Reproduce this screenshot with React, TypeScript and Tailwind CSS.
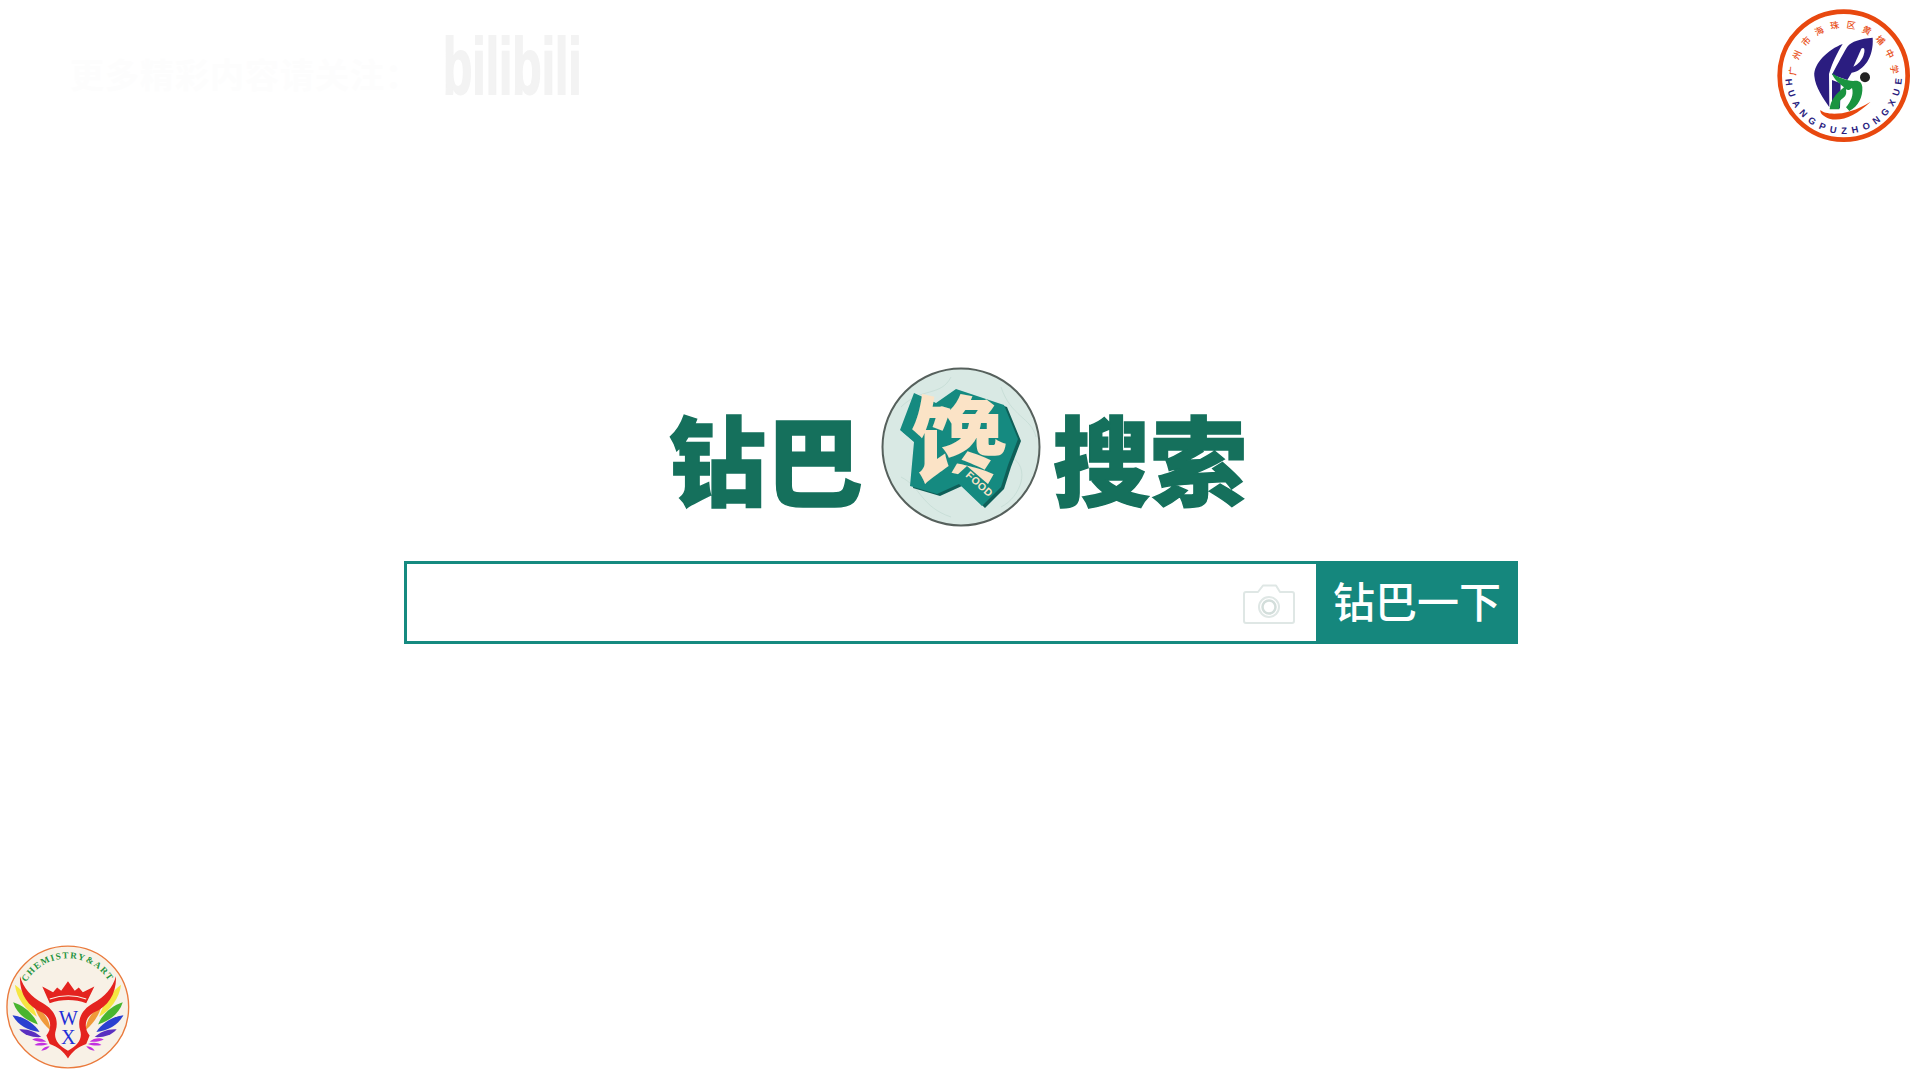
const CJK = "'Noto Sans CJK SC','Noto Sans',sans-serif";

function SchoolBadge() {
  return (
    <svg viewBox="0 0 480 480" className="w-full h-full">
      <defs>
        <path id="hp-top" d="M108 227 A143 143 0 1 1 394 227" />
        <path id="hp-bottom" d="M76 227 A175 175 0 0 0 426 227" />
      </defs>
      <circle cx="251" cy="227" r="192" fill="#fff" stroke="#e8480f" strokeWidth="14" />
      <text fontFamily={CJK} fontSize="27" fontWeight="500" fill="#e8501a">
        <textPath href="#hp-top" startOffset="0%" textLength="445">广州市海珠区黄埔中学</textPath>
      </text>
      <text fontFamily="'Liberation Sans',sans-serif" fontSize="28" fontWeight="700" fill="#2b1d80">
        <textPath href="#hp-bottom" startOffset="2%" textLength="530">HUANGPUZHONGXUE</textPath>
      </text>
      <path d="M248 132 C205 148 160 190 163 228 C166 262 190 295 208 322 L207 222 C216 190 232 158 248 132Z" fill="#2b1d80" />
      <path d="M338 113 C300 116 275 124 262 140 C245 168 226 205 216 224 L262 240 L275 218 C312 212 342 170 338 113Z" fill="#2b1d80" />
      <path d="M304 146 C314 140 316 150 310 168 C302 186 290 196 280 200 Z" fill="#fff" />
      <path d="M216 240 L242 250 L240 325 L216 325Z" fill="#2b1d80" />
      <path d="M216 220 C235 232 260 243 280 243 C296 240 306 246 307 262 C309 290 295 320 268 333 L258 322 C272 305 282 285 276 264 C270 270 264 272 258 268 C262 290 250 292 240 302 L238 328 L209 328 C212 300 225 285 252 262 C240 252 222 240 216 220Z" fill="#1a9440" />
      <circle cx="315" cy="232" r="15" fill="#222" />
      <path d="M181 330 C198 346 262 350 332 305 C288 346 245 366 208 356 C192 350 180 342 181 330Z" fill="#e8480f" />
    </svg>
  );
}

function Feathers() {
  return (
    <g>
      <path d="M47 150 C52 190 78 225 112 245 C100 205 75 170 47 150Z" fill="#f5e642" />
      <path d="M42 202 C52 235 78 255 115 268 C105 240 75 212 42 202Z" fill="#49b52f" />
      <path d="M40 240 C55 270 85 285 120 290 C105 265 75 245 40 240Z" fill="#2a3fd0" />
      <path d="M60 282 C75 300 100 307 125 305 C110 290 85 280 60 282Z" fill="#5a2fc0" />
      <path d="M98 312 C110 318 125 320 140 318 C128 308 110 305 98 312Z M105 328 C118 332 132 330 145 325 C132 320 115 320 105 328Z M125 345 C135 345 145 340 150 332 C140 332 130 336 125 345Z" fill="#c32fe0" />
      <path d="M105 215 C115 245 130 265 152 285 C150 255 132 225 105 215Z" fill="#f09a3a" />
      <path d="M62 125 C60 175 85 215 128 232 C152 245 160 275 140 300 L150 325 C175 335 190 345 204 368 L204 345 C175 330 160 310 168 285 C178 250 160 222 130 205 C95 185 72 160 62 125Z" fill="#e4231f" />
    </g>
  );
}

function ChemBadge() {
  return (
    <svg viewBox="0 0 420 420" className="w-full h-full">
      <defs>
        <path id="ch-top" d="M80 143 A143 143 0 0 1 327 143" />
      </defs>
      <circle cx="203.5" cy="216" r="180" fill="#f8f1e6" stroke="#ea7a3c" strokeWidth="4" />
      <text fontFamily="'Liberation Serif',serif" fontSize="27" fontWeight="700" fill="#1f9440">
        <textPath href="#ch-top" startOffset="0%" textLength="292">CHEMISTRY&amp;ART</textPath>
      </text>
      <Feathers />
      <g transform="translate(408 0) scale(-1 1)">
        <Feathers />
      </g>
      <path d="M150 205 L128 155 L160 172 L172 158 L184 168 L204 140 L224 168 L236 158 L248 172 L282 155 L258 205 C225 192 185 192 150 205Z" fill="#e4231f" />
      <path d="M150 192 C185 180 225 180 258 192" fill="none" stroke="#f8f1e6" strokeWidth="3" />
      <text x="205" y="268" textAnchor="middle" fontFamily="'Liberation Serif',serif" fontSize="60" fill="#1f2fd8">W</text>
      <text x="205" y="325" textAnchor="middle" fontFamily="'Liberation Serif',serif" fontSize="60" fill="#1f2fd8">X</text>
    </svg>
  );
}

function FoodEmblem() {
  return (
    <svg viewBox="0 0 160 160" className="w-full h-full">
      <circle cx="80" cy="80" r="78.5" fill="#d9e9e4" stroke="#56605c" strokeWidth="2" />
      <g fill="none" stroke="#c9dfd8" strokeWidth="1">
        <path d="M20 40 C40 20 60 30 70 10" />
        <path d="M120 20 C130 50 150 50 155 70" />
        <path d="M130 90 C150 100 140 130 120 140" />
        <path d="M20 110 C40 120 40 140 70 150" />
      </g>
      <path
        className="[filter:drop-shadow(3px_2px_0_#0f5f58)]"
        d="M33 26 L55 36 L75 22 L123 38 L137 72 L127 98 L120 120 L101 139 L78 117 L56 127 L29 119 L33 75 L19 63Z"
        fill="#158a80"
      />
      <text x="78" y="108" textAnchor="middle" fontFamily={CJK} fontWeight="900" fontSize="94" fill="#fbe3c6">馋</text>
      <path d="M74 110 L86 99 L115 124 L101 136Z" fill="#158a80" />
      <text transform="translate(84 109) rotate(42)" fontFamily="'Liberation Sans',sans-serif" fontWeight="700" fontSize="10.5" fill="#fbe3c6" letterSpacing="0.5">FOOD</text>
    </svg>
  );
}

function CameraIcon() {
  return (
    <svg viewBox="0 0 52 40" className="w-[52px] h-[40px]" fill="none" stroke="#dfe7e5" strokeWidth="2">
      <path d="M3 8 H15 L20 1.5 H33 L37 8 H49 C50 8 51 9 51 10 V37 C51 38 50 39 49 39 H3 C2 39 1 38 1 37 V10 C1 9 2 8 3 8Z" strokeLinejoin="round" />
      <circle cx="26" cy="23" r="10" />
      <circle cx="26" cy="23" r="6.5" stroke="#d3dedb" strokeWidth="2.5" />
    </svg>
  );
}

export default function App() {
  return (
    <div className="relative w-full h-[1080px] bg-white overflow-hidden flex flex-col items-center pt-[367px]">
      <div className="absolute left-[70px] top-[30px] flex items-end" style={{ fontFamily: CJK }}>
        <span className="w-[373px] text-[34px] leading-[60px] text-[#fdfdfd] font-bold tracking-[1px] whitespace-nowrap">更多精彩内容请关注：</span>
        <span className="text-[80px] leading-[74px] text-[#f3f3f3] font-bold origin-left scale-x-[0.6] [font-family:'Liberation_Sans',sans-serif] [-webkit-text-stroke:2px_#f3f3f3]">bilibili</span>
      </div>

      <div className="absolute right-0 top-0 w-[160px] h-[160px]">
        <SchoolBadge />
      </div>
      <div className="absolute left-[-1px] bottom-[4px] w-[142px] h-[142px]">
        <ChemBadge />
      </div>

      <div className="flex items-center h-[160px] ml-[-4px]" style={{ fontFamily: CJK }}>
        <span className="w-[194px] text-[97px] leading-none font-black text-[#15705c] mt-[16px] [-webkit-text-stroke:1.5px_#15705c]">钻巴</span>
        <div className="w-[160px] h-[160px] ml-[18px] mr-[12px]">
          <FoodEmblem />
        </div>
        <span className="w-[194px] text-[97px] leading-none font-black text-[#15705c] mt-[16px] [-webkit-text-stroke:1.5px_#15705c]">搜索</span>
      </div>

      <div className="mt-[34px] ml-[2px] w-[1114px] h-[83px] flex border-[3px] border-[#158a80] bg-white">
        <div className="flex-1 flex items-center justify-end pr-[21px] pt-[2px]">
          <CameraIcon />
        </div>
        <button
          className="w-[202px] -my-[3px] -mr-[3px] bg-[#15877d] text-white text-[42px] font-medium pb-[6px] flex items-center justify-center"
          style={{ fontFamily: CJK }}
        >
          钻巴一下
        </button>
      </div>
    </div>
  );
}
